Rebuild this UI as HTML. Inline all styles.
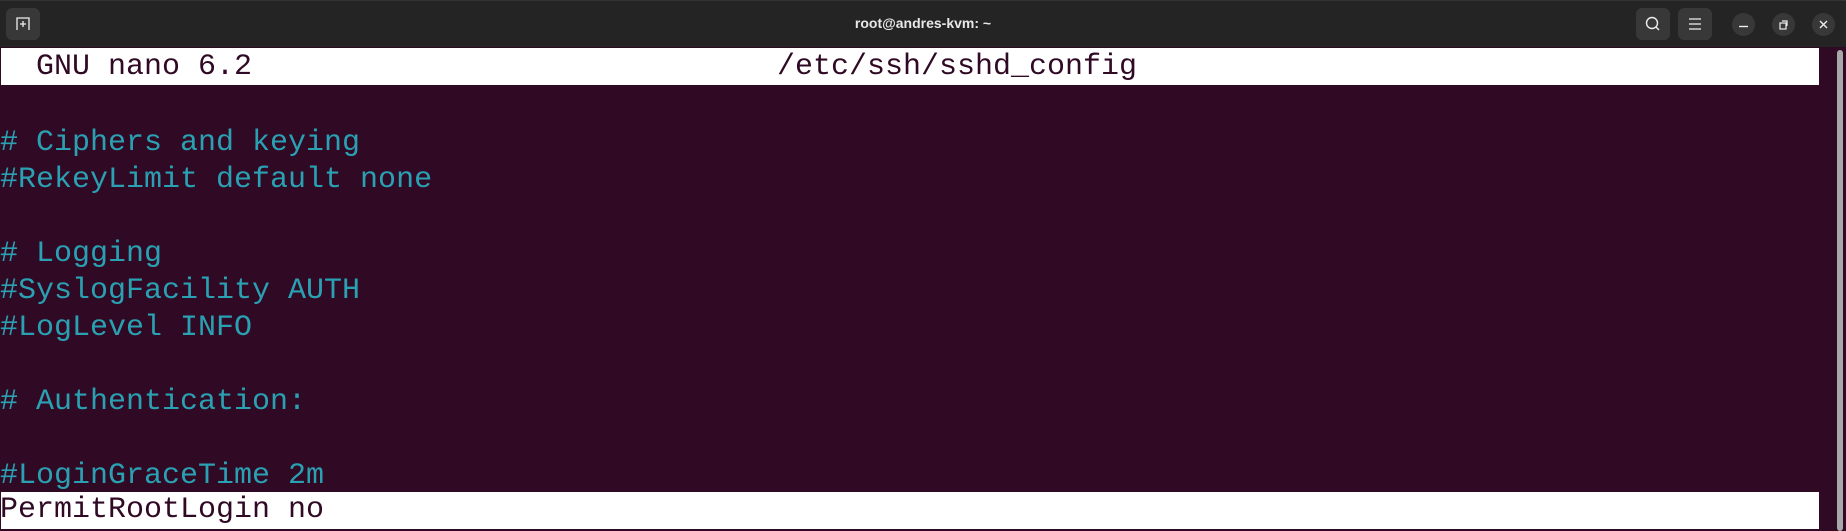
<!DOCTYPE html>
<html><head><style>
html,body{margin:0;padding:0;width:1846px;height:531px;overflow:hidden;background:#300a24;}
.tb{position:absolute;left:0;top:0;width:1846px;height:47px;background:#242424;border-top:1px solid #333;box-sizing:border-box;}
.title{position:absolute;left:0;width:1846px;top:14px;text-align:center;color:#e8e8e8;font:bold 14px "Liberation Sans",sans-serif;}
.btn{position:absolute;top:7px;width:34px;height:32px;background:#383838;border-radius:6px;}
.cb{position:absolute;top:12px;width:23px;height:23px;background:#383838;border-radius:50%;}
.t{position:absolute;left:0;font:30px/37px "Liberation Mono",monospace;white-space:pre;color:#2aa1b3;margin-top:3px;}
.bar{position:absolute;left:1px;width:1818px;height:37px;background:#fff;}
.dark{color:#300a24;}
</style></head><body>
<div class="tb">
 <div class="btn" style="left:6px;"><svg width="34" height="32"><path d="M11 22V10h12v12M14 16h6M17 13v6" stroke="#eee" stroke-width="1.3" fill="none"/></svg></div>
 <div class="title">root@andres-kvm: ~</div>
 <div class="btn" style="left:1636px;"><svg width="34" height="32"><circle cx="16" cy="15" r="5.5" stroke="#eee" stroke-width="1.4" fill="none"/><path d="M20 19l3 3" stroke="#eee" stroke-width="1.4"/></svg></div>
 <div class="btn" style="left:1678px;"><svg width="34" height="32"><path d="M11 11h12M11 16h12M11 21h12" stroke="#eee" stroke-width="1.3"/></svg></div>
 <div class="cb" style="left:1732px;"><svg width="23" height="23"><path d="M7 13.5h9" stroke="#eee" stroke-width="1.4"/></svg></div>
 <div class="cb" style="left:1772px;"><svg width="23" height="23"><rect x="8" y="10" width="6" height="6" stroke="#eee" stroke-width="1.2" fill="none"/><path d="M10 8h5v5" stroke="#eee" stroke-width="1.2" fill="none"/></svg></div>
 <div class="cb" style="left:1812px;"><svg width="23" height="23"><path d="M8 8l7 7M15 8l-7 7" stroke="#eee" stroke-width="1.4"/></svg></div>
</div>
<div class="bar" style="top:48px;"></div>
<div class="bar" style="top:492px;"></div>
<div style="position:absolute;left:1837px;top:50px;width:6px;height:481px;background:#a8a8a8;border-radius:3px;"></div>
<div class="t dark" style="top:48px;margin-top:1px;">  GNU nano 6.2</div>
<div class="t dark" style="top:48px;margin-top:1px;left:777px;">/etc/ssh/sshd_config</div>
<div class="t" style="top:122px;"># Ciphers and keying</div>
<div class="t" style="top:159px;">#RekeyLimit default none</div>
<div class="t" style="top:233px;"># Logging</div>
<div class="t" style="top:270px;">#SyslogFacility AUTH</div>
<div class="t" style="top:307px;">#LogLevel INFO</div>
<div class="t" style="top:381px;"># Authentication:</div>
<div class="t" style="top:455px;">#LoginGraceTime 2m</div>
<div class="t dark" style="top:492px;margin-top:0;">PermitRootLogin no</div>
</body></html>
